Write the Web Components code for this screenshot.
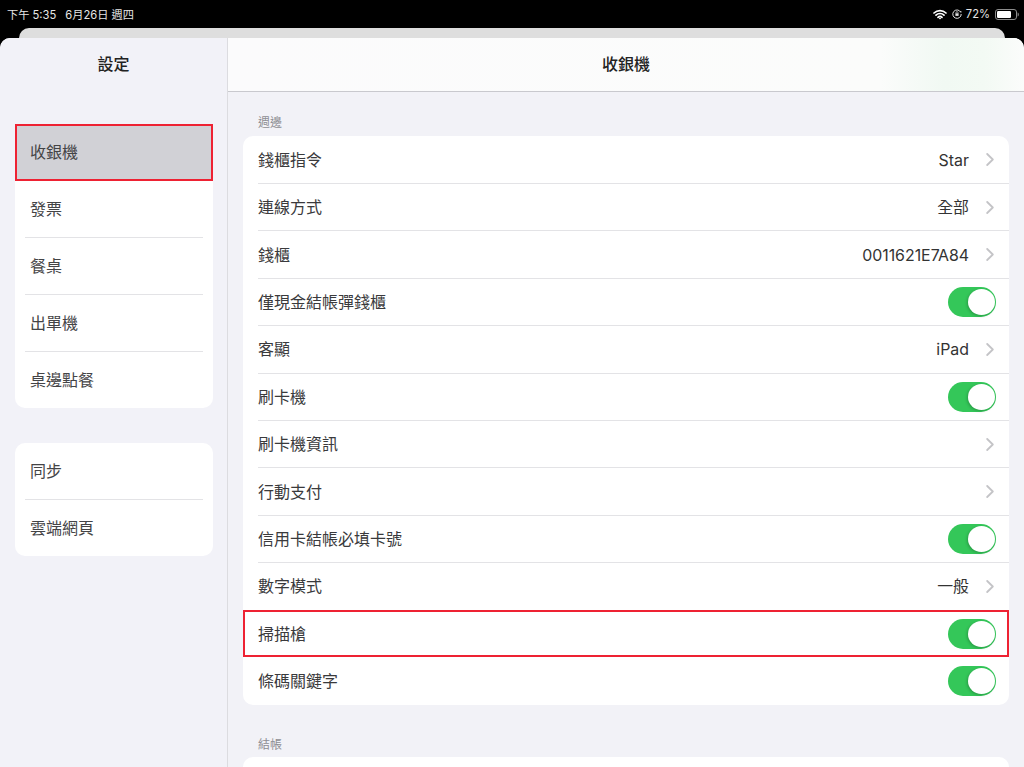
<!DOCTYPE html>
<html lang="zh-Hant"><head><meta charset="utf-8"><title>設定</title>
<style>
html,body{margin:0;height:767px;overflow:hidden;background:#000;font-family:Inter,"Noto Sans CJK TC",sans-serif;color:#333}
</style></head><body>
<ipad-settings></ipad-settings>
<template id="t-status"><style>
:host{display:flex;height:28px;box-sizing:border-box;padding:0 5px 0 7px;align-items:center;justify-content:space-between;color:#e6e6e6;font-size:11.2px;background:#000}
.l{display:flex;gap:9px}.r{display:flex;align-items:center;gap:5px}
svg{display:block}
</style><div class="l"><span>下午 5:35</span><span>6月26日 週四</span></div>
<div class="r">
<svg width="14" height="11" viewBox="0 0 14 11"><path d="M1 4a8.6 8.6 0 0 1 12 0M3 6.2a5.6 5.6 0 0 1 8 0M5 8.3a2.8 2.8 0 0 1 4 0" fill="none" stroke="#fff" stroke-width="1.7" stroke-linecap="round"/><path d="M5.8 9.2 7 10.6l1.2-1.4a1.7 1.7 0 0 0-2.4 0z" fill="#fff"/></svg>
<svg width="10" height="10" viewBox="0 0 10 10" style="margin-right:-1px"><path d="M8.6 3A4.2 4.2 0 1 0 9.2 5" fill="none" stroke="#e0e0e0" stroke-width="1"/><path d="M7.6 2.6 9.4 1.9 9.2 3.9z" fill="#e0e0e0"/><rect x="3.4" y="4.3" width="3.2" height="2.6" fill="#e0e0e0"/><path d="M4 4.4V3.6a1 1 0 0 1 2 0v.8" fill="none" stroke="#e0e0e0" stroke-width=".7"/></svg>
<span>72%</span>
<svg width="24" height="11" viewBox="0 0 24 11"><rect x=".5" y=".5" width="21" height="10" rx="2.5" fill="none" stroke="#8c8c8c"/><rect x="2" y="2" width="14" height="7" rx="1.2" fill="#fff"/><path d="M22.6 3.6c.8.2 1.2 1 1.2 1.9s-.4 1.7-1.2 1.9z" fill="#8c8c8c"/></svg>
</div></template>

<template id="t-group"><style>
:host{display:block;background:#fff;border-radius:10px;margin:0 14px 35px 15px}
</style><slot></slot></template>

<template id="t-side"><style>
:host{display:flex;align-items:center;height:57px;box-sizing:border-box;padding:0 0 4px 15px;font-size:16px;color:#444446;position:relative}
:host::after{content:"";position:absolute;left:10px;right:10px;bottom:0;height:1px;background:#e3e3e6}
:host([last])::after,:host([active])::after{display:none}
:host([last]){height:56px;padding-bottom:3px}
:host([active]){background:#d1d1d6;outline:2px solid #ee2233;outline-offset:-2px}
</style><slot></slot></template>

<template id="t-row"><style>
:host{display:flex;align-items:center;height:47.42px;box-sizing:border-box;padding:0 13px 0 15px;font-size:16px;color:#3a3a3c;position:relative}
:host::after{content:"";position:absolute;left:15px;right:0;bottom:-.5px;height:1px;background:#e3e3e6}
:host([last])::after,:host([mark])::after{display:none}
:host([mark])::before{content:"";position:absolute;inset:0;border:2px solid #ee2233;pointer-events:none}
.lab{flex:1;display:block;padding-bottom:2px}
.val{color:#333;font-size:15.9px;display:block}
::slotted(.lat){display:block;padding-top:1px}
::slotted(.cjk){display:block;padding-bottom:2px}
</style><span class="lab"><slot></slot></span><span class="val"><slot name="val"></slot></span><slot name="ctl"></slot></template>

<template id="t-chev"><style>
:host{display:block}svg{display:block;margin:0 2px 0 17px}
</style><svg width="8" height="13" viewBox="0 0 8 13"><path d="M1.2 1 6.8 6.5 1.2 12" fill="none" stroke="#c4c4c7" stroke-width="1.8" stroke-linecap="round" stroke-linejoin="round"/></svg></template>

<template id="t-toggle"><style>
:host{display:block;width:48px;height:30px;box-sizing:border-box;background:#34c759;border-radius:15px;padding:2px 1px 2px 20px}
i{display:block;width:27px;height:26px;border-radius:50%;background:#fff;box-shadow:-1px 1px 3px rgba(0,0,0,.22)}
</style><i></i></template>

<template id="t-app"><style>
:host{display:flex;flex-direction:column;height:767px;overflow:hidden}
.peek{height:10px;margin:0 19px;background:#dedede;border-radius:10px 10px 0 0;flex:none}
.sheet{flex:1;min-height:0;display:flex;background:#f2f2f7;border-radius:10px 10px 0 0;overflow:hidden}
aside{width:227px;flex:none;border-right:1px solid #dcdce0;background:#f2f2f8;overflow:hidden}
main{flex:1;min-width:0;overflow:hidden}
header{height:49px;padding-bottom:4px;display:flex;align-items:center;justify-content:center;font-size:16px;font-weight:500;color:#222}
aside header{margin-bottom:33px}
main header{border-bottom:1px solid #c9c9ce;background:linear-gradient(90deg,#fbfbfc 0,#fbfcfb 82%,#f1f9f3 90%,#f3faf4 95%,#fbfcfb 100%)}
.cap{font-size:12px;color:#8e8e93;line-height:16px;margin:0 0 5px 30px;padding-top:23px}
.cap.two{padding-top:0;margin-top:32px;margin-bottom:4px}
x-group.m{margin:0 15px 0 15px}
</style>
<status-bar></status-bar>
<div class="peek"></div>
<div class="sheet">
<aside><header>設定</header>
<x-group><side-item active>收銀機</side-item><side-item>發票</side-item><side-item>餐桌</side-item><side-item>出單機</side-item><side-item last>桌邊點餐</side-item></x-group>
<x-group><side-item>同步</side-item><side-item last>雲端網頁</side-item></x-group>
</aside>
<main><header>收銀機</header>
<div class="cap">週邊</div>
<x-group class="m">
<set-row>錢櫃指令<span slot="val" class="lat">Star</span><x-chev slot="ctl"></x-chev></set-row>
<set-row>連線方式<span slot="val" class="cjk">全部</span><x-chev slot="ctl"></x-chev></set-row>
<set-row>錢櫃<span slot="val" class="lat">0011621E7A84</span><x-chev slot="ctl"></x-chev></set-row>
<set-row>僅現金結帳彈錢櫃<x-toggle slot="ctl"></x-toggle></set-row>
<set-row>客顯<span slot="val" class="lat">iPad</span><x-chev slot="ctl"></x-chev></set-row>
<set-row>刷卡機<x-toggle slot="ctl"></x-toggle></set-row>
<set-row>刷卡機資訊<x-chev slot="ctl"></x-chev></set-row>
<set-row>行動支付<x-chev slot="ctl"></x-chev></set-row>
<set-row>信用卡結帳必填卡號<x-toggle slot="ctl"></x-toggle></set-row>
<set-row>數字模式<span slot="val" class="cjk">一般</span><x-chev slot="ctl"></x-chev></set-row>
<set-row mark>掃描槍<x-toggle slot="ctl"></x-toggle></set-row>
<set-row last>條碼關鍵字<x-toggle slot="ctl"></x-toggle></set-row>
</x-group>
<div class="cap two">結帳</div>
<x-group class="m"><set-row last>&nbsp;</set-row></x-group>
</main>
</div></template>
<script>
const reg=(name,id)=>customElements.define(name,class extends HTMLElement{
  constructor(){super();this.attachShadow({mode:'open'}).appendChild(document.getElementById(id).content.cloneNode(true));}
});
reg('status-bar','t-status');reg('x-group','t-group');reg('side-item','t-side');reg('set-row','t-row');reg('x-chev','t-chev');reg('x-toggle','t-toggle');reg('ipad-settings','t-app');
</script>
</body></html>
